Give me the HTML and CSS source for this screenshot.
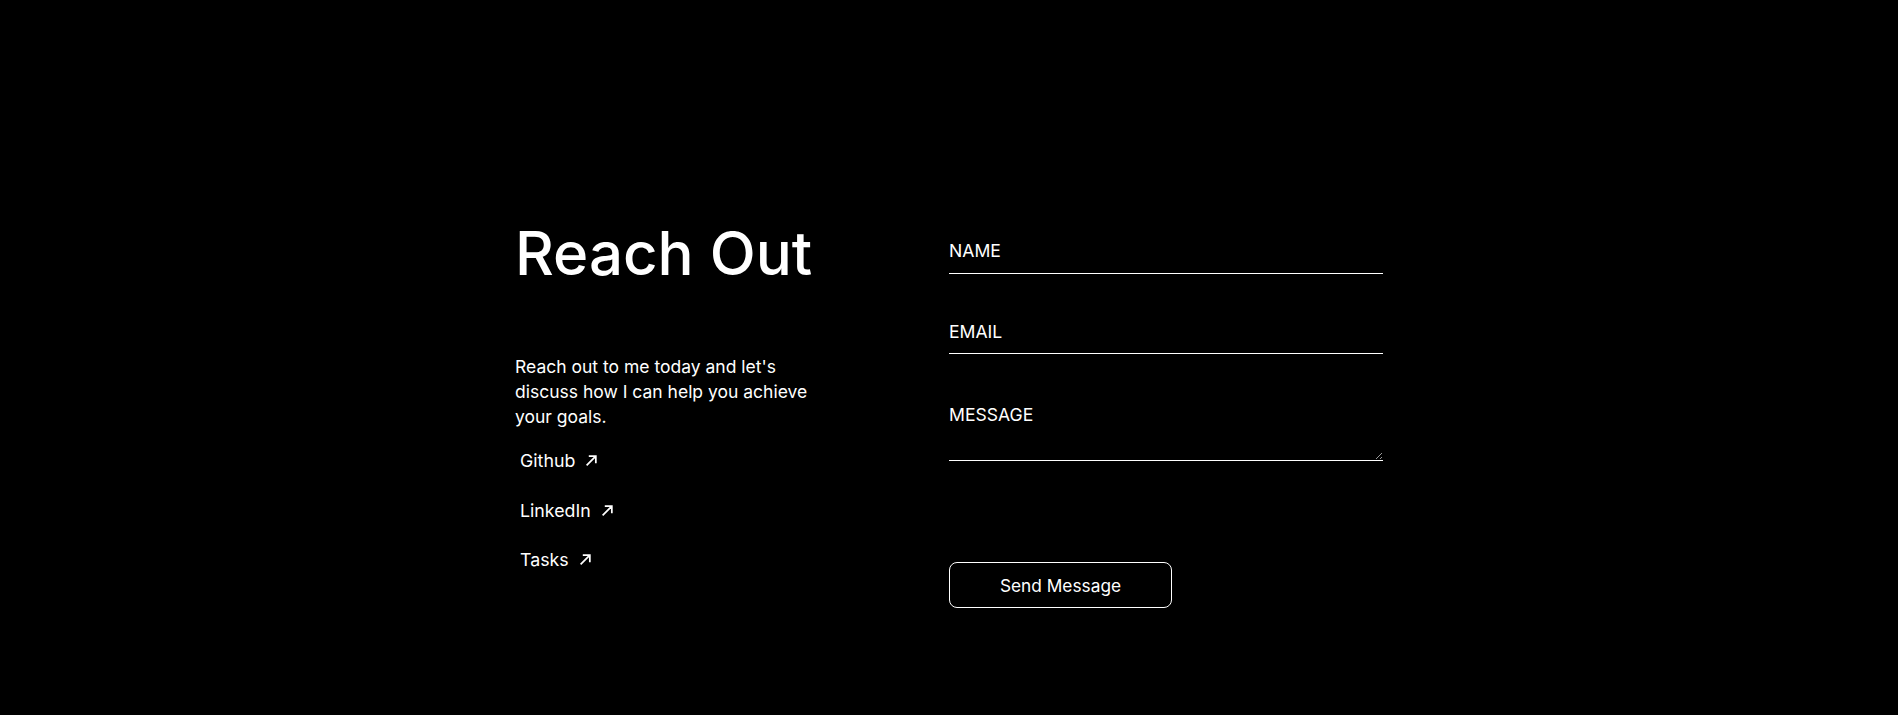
FILE: index.html
```html
<!DOCTYPE html>
<html lang="en">
<head>
<meta charset="utf-8">
<title>Reach Out</title>
<link rel="stylesheet" href="styles.css">
</head>
<body>
<section class="contact">
  <div class="intro">
    <h1 class="title">Reach Out</h1>
    <p class="lead">Reach out to me today and let's discuss how I can help you achieve your goals.</p>
    <ul class="links">
      <li><a class="link" href="#">Github <svg class="arrow" viewBox="0 0 12 12" width="12" height="12"><path d="M1.5 10.5 L10 2 M3.5 2 H10 V8.5" fill="none" stroke="currentColor" stroke-width="1.6"/></svg></a></li>
      <li><a class="link" href="#">LinkedIn <svg class="arrow" viewBox="0 0 12 12" width="12" height="12"><path d="M1.5 10.5 L10 2 M3.5 2 H10 V8.5" fill="none" stroke="currentColor" stroke-width="1.6"/></svg></a></li>
      <li><a class="link" href="#">Tasks <svg class="arrow" viewBox="0 0 12 12" width="12" height="12"><path d="M1.5 10.5 L10 2 M3.5 2 H10 V8.5" fill="none" stroke="currentColor" stroke-width="1.6"/></svg></a></li>
    </ul>
  </div>
  <form class="form">
    <input class="field" type="text" placeholder="NAME">
    <input class="field" type="email" placeholder="EMAIL">
    <textarea class="field area" placeholder="MESSAGE"></textarea>
    <button class="send" type="button">Send Message</button>
  </form>
</section>
</body>
</html>
```
FILE: styles.css
```css
* { box-sizing: border-box; }
html, body { background: #000; }
body {
  margin: 0;
  color: #fff;
  font-family: Inter, "Noto Sans", sans-serif;
}
.contact {
  width: 868px;
  margin: 0 auto;
  padding-top: 217px;
  display: grid;
  grid-template-columns: 434px 434px;
  align-items: start;
}
.title {
  margin: 0;
  font-size: 60px;
  font-weight: 500;
  line-height: 72px;
}
.lead {
  margin: 65px 0 0;
  max-width: 320px;
  font-size: 17.5px;
  line-height: 25px;
}
.links {
  list-style: none;
  margin: 21px 0 0;
  padding: 0 0 0 5px;
  display: flex;
  flex-direction: column;
  gap: 28.5px;
}
.link {
  color: #fff;
  text-decoration: none;
  font-size: 17.8px;
  display: inline-flex;
  align-items: center;
  gap: 10px;
}
.arrow { display: block; width: 13px; height: 13px; }
.form {
  display: flex;
  flex-direction: column;
  align-items: flex-start;
  padding-top: 10.6px;
}
.field {
  width: 100%;
  background: transparent;
  border: none;
  border-bottom: 1px solid #fff;
  color: #fff;
  font-family: Inter, "Noto Sans", sans-serif;
  font-size: 17.6px;
  padding: 12.35px 0 11.75px;
  margin: 0 0 34.5px;
  outline: none;
  border-radius: 0;
}
.field::placeholder { color: #fff; opacity: 1; }
.area {
  height: 72.4px;
  padding-top: 15.5px;
  resize: vertical;
  display: block;
  margin-bottom: 101px;
}
.send {
  width: 223px;
  height: 46px;
  background: transparent;
  color: #fff;
  border: 1px solid #fff;
  border-radius: 8px;
  font-family: Inter, "Noto Sans", sans-serif;
  font-size: 17.3px;
  cursor: pointer;
}
```
